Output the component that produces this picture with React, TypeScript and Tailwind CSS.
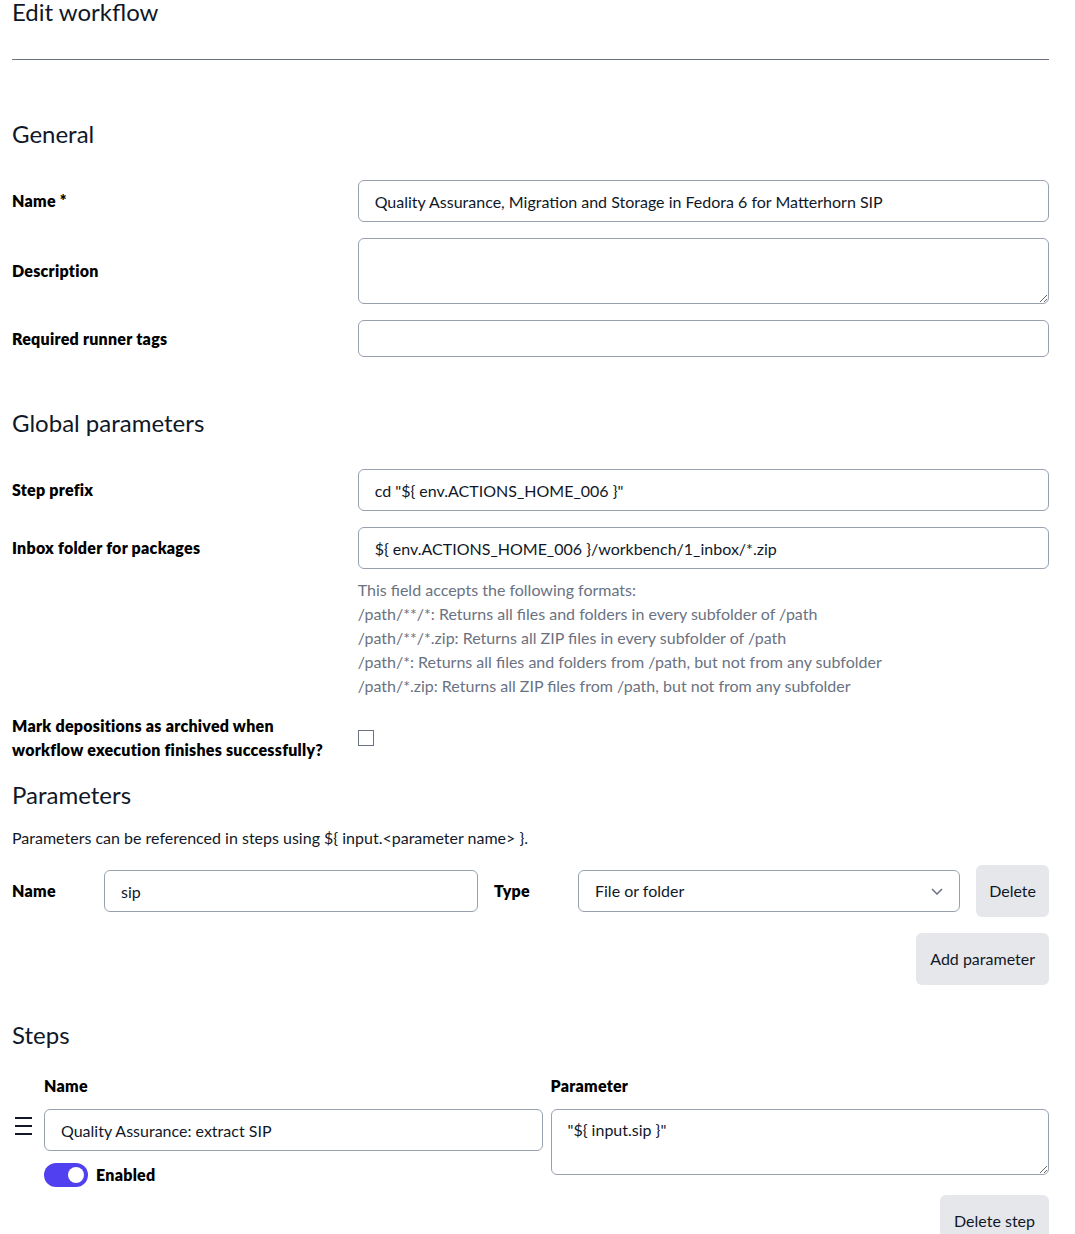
import React from 'react';

const inputCls =
  'w-full rounded-md border border-gray-400 bg-white px-4 text-base text-gray-900 outline-none';

const boldCls = 'font-extrabold tracking-[0.25px] text-black';

const Row: React.FC<{ label: React.ReactNode; children: React.ReactNode }> = ({ label, children }) => (
  <div className="grid grid-cols-3 items-center">
    <div className={`${boldCls} leading-6`}>{label}</div>
    <div className="col-span-2">{children}</div>
  </div>
);

const helpLines = [
  'This field accepts the following formats:',
  '/path/**/*: Returns all files and folders in every subfolder of /path',
  '/path/**/*.zip: Returns all ZIP files in every subfolder of /path',
  '/path/*: Returns all files and folders from /path, but not from any subfolder',
  '/path/*.zip: Returns all ZIP files from /path, but not from any subfolder',
];

const Hamburger = () => (
  <svg width="20" height="18" viewBox="0 0 20 18" className="text-gray-900">
    <path d="M2 1h17M2 9h17M2 17h17" stroke="currentColor" strokeWidth="2" />
  </svg>
);

export default function App() {
  return (
    <div className="px-3 pr-[26px] text-gray-900 font-['Lato','Liberation_Sans',sans-serif] text-base">
      <h1 className="text-2xl leading-6">Edit workflow</h1>
      <hr className="mt-[35px] border-gray-500" />

      <h2 className="mt-[58px] text-2xl leading-8">General</h2>
      <div className="mt-[30px] flex flex-col gap-4">
        <Row label="Name *">
          <input className={`${inputCls} h-[42px]`} defaultValue="Quality Assurance, Migration and Storage in Fedora 6 for Matterhorn SIP" />
        </Row>
        <Row label="Description">
          <textarea className={`${inputCls} block h-[66px] py-2`} />
        </Row>
        <Row label="Required runner tags">
          <input className={`${inputCls} h-[37px]`} />
        </Row>
      </div>

      <h2 className="mt-[50px] text-2xl leading-8">Global parameters</h2>
      <div className="mt-[30px] flex flex-col gap-4">
        <Row label="Step prefix">
          <input className={`${inputCls} h-[42px]`} defaultValue={'cd "${ env.ACTIONS_HOME_006 }"'} />
        </Row>
        <div className="grid grid-cols-3">
          <div className={`${boldCls} leading-6 h-[42px] flex items-center`}>Inbox folder for packages</div>
          <div className="col-span-2">
            <input className={`${inputCls} h-[42px]`} defaultValue="${ env.ACTIONS_HOME_006 }/workbench/1_inbox/*.zip" />
            <div className="mt-[9px] text-gray-500 leading-6">
              {helpLines.map(l => (
                <div key={l}>{l}</div>
              ))}
            </div>
          </div>
        </div>
        <Row label={<>Mark depositions as archived when<br />workflow execution finishes successfully?</>}>
          <input type="checkbox" className="block h-4 w-4 appearance-none border border-gray-500 bg-white" />
        </Row>
      </div>

      <h2 className="mt-[17px] text-2xl leading-8">Parameters</h2>
      <p className="mt-[15px] leading-6">Parameters can be referenced in steps using ${'{'} input.&lt;parameter name&gt; {'}'}.</p>
      <div className="mt-[15px] flex items-center">
        <div className={`w-[92px] ${boldCls}`}>Name</div>
        <input className={`${inputCls} h-[42px] !w-[374px]`} defaultValue="sip" />
        <div className={`ml-4 w-[84px] ${boldCls}`}>Type</div>
        <div className="relative w-[382px]">
          <select className={`${inputCls} h-[42px] appearance-none`} defaultValue="file">
            <option value="file">File or folder</option>
          </select>
          <svg className="pointer-events-none absolute right-[17px] top-[18px] text-gray-500" width="12" height="7" viewBox="0 0 12 7">
            <path d="M1 1l5 5 5-5" fill="none" stroke="currentColor" strokeWidth="1.5" />
          </svg>
        </div>
        <button className="ml-auto h-[52px] rounded-md bg-gray-200 px-[13px]">Delete</button>
      </div>
      <div className="mt-4 flex justify-end">
        <button className="h-[52px] rounded-md bg-gray-200 px-[14px]">Add parameter</button>
      </div>

      <h2 className="mt-[34px] text-2xl leading-8">Steps</h2>
      <div className="mt-[23px] flex">
        <div className="w-8 pt-[43px] pl-[1px]">
          <Hamburger />
        </div>
        <div className="flex-1 grid grid-cols-2 gap-2">
          <div>
            <div className={`${boldCls} leading-6`}>Name</div>
            <input className={`${inputCls} mt-[11px] h-[42px]`} defaultValue="Quality Assurance: extract SIP" />
            <div className="mt-3 flex items-center gap-2">
              <span className="relative inline-block h-6 w-11 rounded-full bg-[#5040f0]">
                <span className="absolute right-[4px] top-[4px] h-4 w-4 rounded-full bg-white" />
              </span>
              <span className={boldCls}>Enabled</span>
            </div>
          </div>
          <div>
            <div className={`${boldCls} leading-6`}>Parameter</div>
            <textarea className={`${inputCls} block mt-[11px] h-[66px] py-2`} defaultValue={'"${ input.sip }"'} />
            <div className="mt-5 flex justify-end">
              <button className="h-[52px] rounded-md bg-gray-200 px-[14px]">Delete step</button>
            </div>
          </div>
        </div>
      </div>
    </div>
  );
}
